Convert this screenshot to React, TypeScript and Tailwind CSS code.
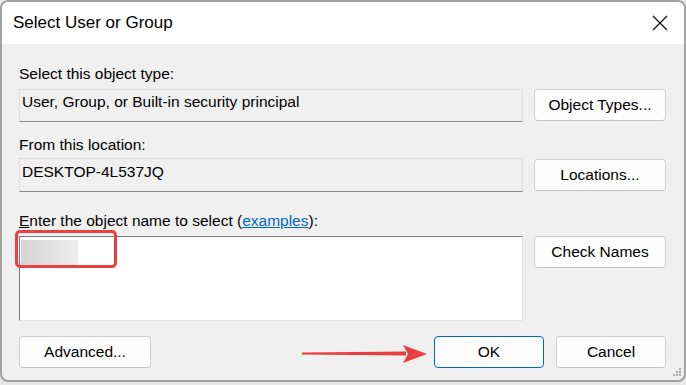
import React from "react";

const font = { fontFamily: '"Liberation Sans", Arial, sans-serif' };

function Btn({ children, primary = false, className = "" }: { children: React.ReactNode; primary?: boolean; className?: string }) {
  return (
    <div
      className={
        "flex h-[32px] items-center justify-center rounded-[4px] border bg-[#fdfdfd] text-[15.5px] text-black " +
        (primary ? "border-[#0067c0] " : "border-[#d0d0d0] border-b-[#c4c4c4] ") +
        className
      }
    >
      {children}
    </div>
  );
}

export default function App() {
  return (
    <div className="relative h-[385px] w-[686px] overflow-hidden bg-[#e9e9e9]" style={font}>
      <div className="relative flex h-[382px] w-[686px] flex-col overflow-hidden rounded-[8px] border-2 border-[#a2a2a2] bg-[#f0f0f0]">
        {/* Title bar */}
        <div className="flex h-[42px] shrink-0 items-center justify-between bg-white pl-[11px] pr-[16px]">
          <span className="text-[17px] leading-[20px] text-black">Select User or Group</span>
          <svg width="16" height="16" viewBox="0 0 16 16" className="mt-[0px]">
            <path d="M1 1 L15 15 M15 1 L1 15" stroke="#111" strokeWidth="1.3" fill="none" />
          </svg>
        </div>
        {/* Body */}
        <div className="flex flex-col pl-[17px] pr-[18px] pt-[21px] text-[15.5px] leading-[18px] text-black">
          <div className="h-[18px]">Select this object type:</div>
          <div className="mt-[6px] flex items-start gap-[11px]">
            <div className="h-[33px] w-[504px] border border-[#dedede] border-b-[#8a8a8a] bg-[#f0f0f0] pl-[2px] pt-[3px]">
              User, Group, or Built-in security principal
            </div>
            <Btn className="w-[132px]">Object Types...</Btn>
          </div>
          <div className="mt-[14px] h-[18px]">From this location:</div>
          <div className="mt-[4px] flex items-start gap-[11px]">
            <div className="h-[34px] w-[504px] border border-[#dedede] border-b-[#8a8a8a] bg-[#f0f0f0] pl-[2px] pt-[4px]">
              DESKTOP-4L537JQ
            </div>
            <Btn className="mt-[1px] w-[132px]">Locations...</Btn>
          </div>
          <div className="mt-[20px] h-[18px]">
            <span className="underline">E</span>nter the object name to select (
            <span className="text-[#0066cc] underline">examples</span>):
          </div>
          <div className="mt-[6px] flex items-start gap-[11px]">
            <div className="relative h-[85px] w-[504px] border border-[#e3e3e3] border-l-[#7a7a7a] border-t-[#7a7a7a] bg-white">
              <div className="absolute left-[1px] top-[3px] h-[27px] w-[57px] bg-gradient-to-r from-[#d5d5d5] to-[#ededed]" />
              <div className="absolute left-[-5px] top-[-7px] h-[38px] w-[102px] rounded-[5px] border-[3px] border-[#e8413f]" />
            </div>
            <Btn className="w-[132px]">Check Names</Btn>
          </div>
          <div className="mt-[15px] flex items-start">
            <Btn className="w-[132px]">Advanced...</Btn>
            <div className="flex-1" />
            <Btn primary className="w-[110px]">OK</Btn>
            <Btn className="ml-[12px] w-[110px]">Cancel</Btn>
          </div>
        </div>
        {/* Resize grip */}
        <svg className="absolute bottom-[1px] right-[1px]" width="12" height="12" viewBox="0 0 12 12">
          <g fill="#a8a8a8">
            <rect x="8" y="1" width="2" height="2" />
            <rect x="5" y="4" width="2" height="2" />
            <rect x="8" y="4" width="2" height="2" />
            <rect x="2" y="7" width="2" height="2" />
            <rect x="5" y="7" width="2" height="2" />
            <rect x="8" y="7" width="2" height="2" />
          </g>
        </svg>
      </div>
      {/* Red arrow annotation */}
      <svg className="absolute left-[300px] top-[343px]" width="130" height="22" viewBox="0 0 130 22">
        <path d="M2 9.6 L106 8.6 L106 12.6 L2 11.6 Z" fill="#e8403f" />
        <path d="M103 2 L127 11 L103 20 L108 11 Z" fill="#e8403f" />
      </svg>
    </div>
  );
}
